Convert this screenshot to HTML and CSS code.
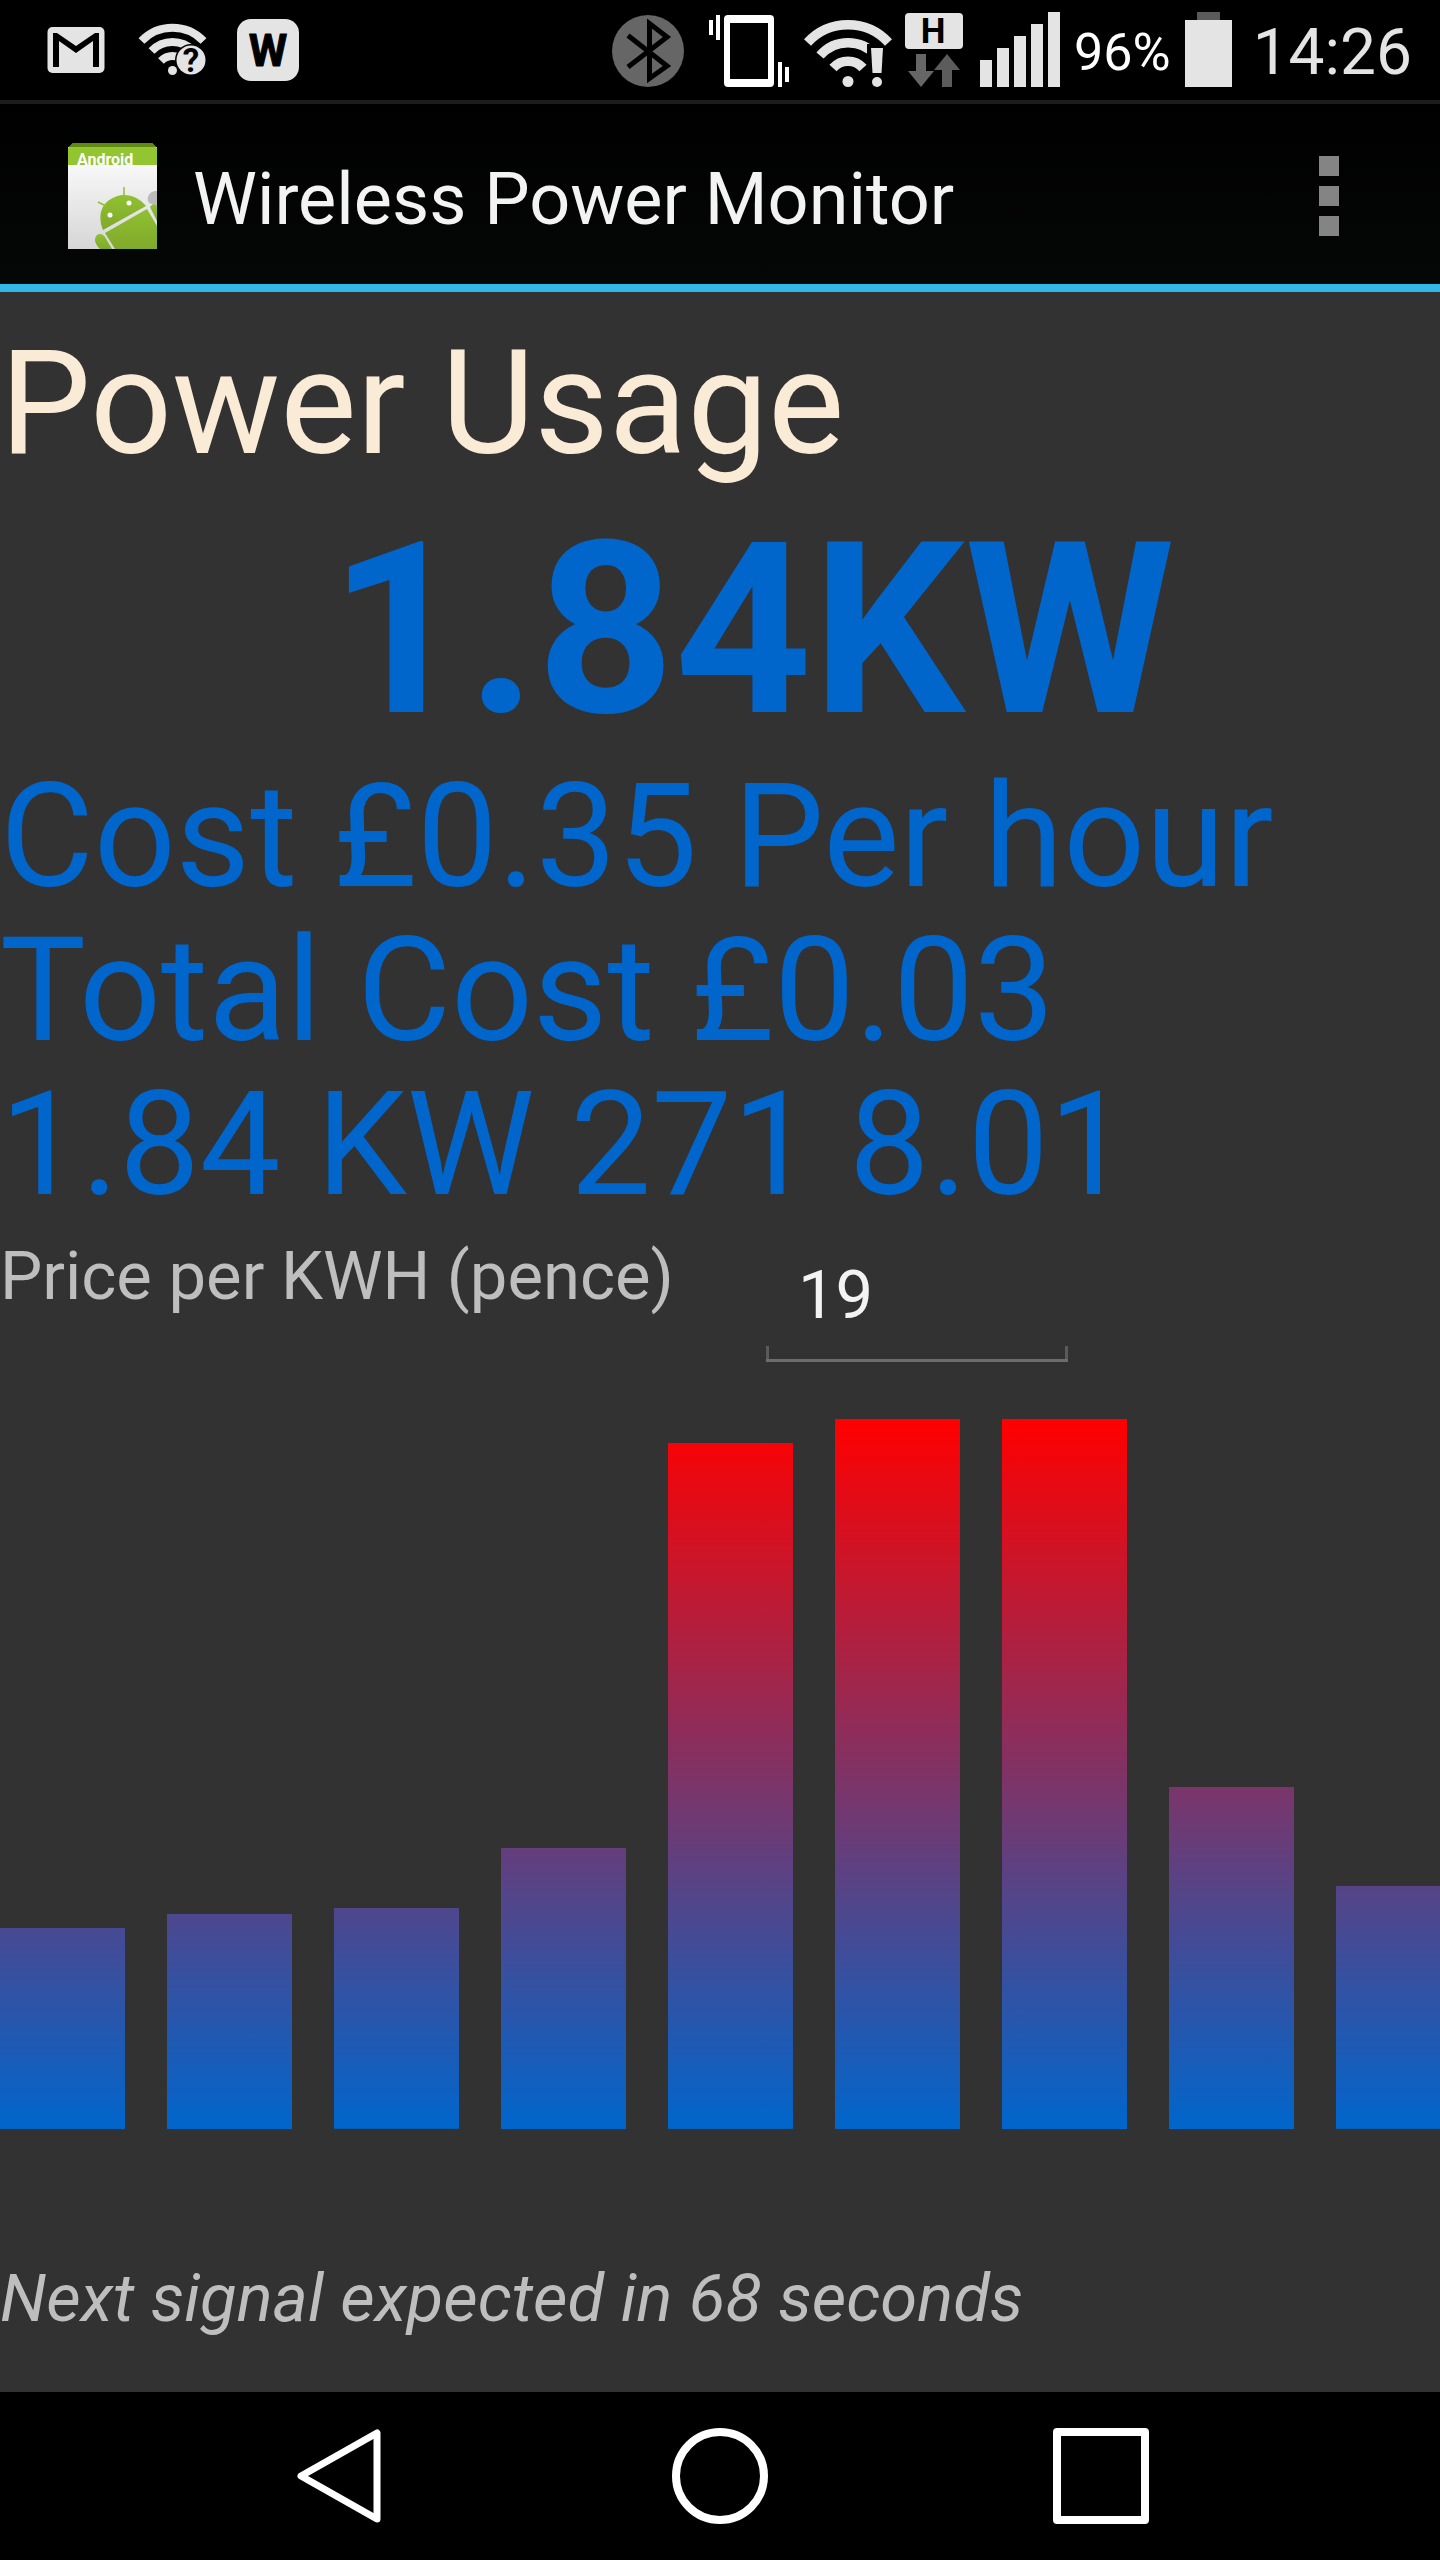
FILE: index.html
```html
<!DOCTYPE html>
<html lang="en">
<head>
  <meta charset="UTF-8" />
  <meta name="viewport" content="width=device-width, initial-scale=1.0" />
  <title>Wireless Power Monitor</title>
  <link rel="stylesheet" href="styles.css">
</head>
<body>
  <!-- System status bar -->
  <div class="status-bar">
    <div class="status-group notifications">
      <svg class="status-icon" width="58" height="100" viewBox="47 0 58 100" aria-label="Gmail">
        <rect x="47.500" y="27" width="57" height="46" rx="5" fill="#e4e4e4"/>
        <path d="M53 67V33H57L76 46L95 33H99V67H93V41L76 53L59 41V67Z" fill="#000"/>
      </svg>
      <svg class="status-icon" width="68" height="100" viewBox="137 0 68 100" aria-label="Wi-Fi available">
        <g fill="none" stroke="#e4e4e4" stroke-width="8">
          <path d="M141.500 41A43 43 0 0 1 203.500 41"/>
          <path d="M151.500 51A29 29 0 0 1 193.500 51"/>
          <path d="M161 61A16 16 0 0 1 184 61"/>
        </g>
        <circle cx="172.500" cy="70.500" r="4.500" fill="#e4e4e4"/>
        <circle cx="191" cy="60" r="16" fill="#000"/>
        <circle cx="191" cy="60" r="14.500" fill="#e4e4e4"/>
        <text class="icon-text" x="191" y="72" font-size="33">?</text>
      </svg>
      <svg class="status-icon" width="62" height="100" viewBox="237 0 62 100" aria-label="W">
        <rect x="237" y="19" width="62" height="62" rx="14" fill="#e4e4e4"/>
        <text class="icon-text heavy" x="268" y="66" font-size="44">W</text>
      </svg>
    </div>

    <div class="status-group system">
      <svg class="status-icon" width="83" height="100" viewBox="610 0 83 100" aria-label="Bluetooth">
        <circle cx="646" cy="51" r="36" fill="#666"/>
        <path d="M626 35.500L665 66L647.500 78.500V23.500L665 37L626 67" fill="none" stroke="#000" stroke-width="5"/>
      </svg>
      <svg class="status-icon" width="81" height="100" viewBox="707 0 81 100" aria-label="Vibrate">
        <path d="M707 20h4v15h-4zM714 15h4v25h-4zM776 62h4v25h-4zM783 67h4v15h-4z" fill="#fff"/>
        <path d="M726 15H768Q772 15 772 19V83Q772 87 768 87H726Q722 87 722 83V19Q722 15 726 15ZM728 23V79H766V23Z" fill="#fff" fill-rule="evenodd"/>
      </svg>
      <svg class="status-icon" width="87" height="100" viewBox="802 0 87 100" aria-label="Wi-Fi">
        <g fill="none" stroke="#e4e4e4" stroke-width="9.500">
          <path d="M818 55.500A37 37 0 0 1 874 55.500"/>
          <path d="M831 68A20 20 0 0 1 861 68"/>
        </g>
        <path d="M865 53V44H885V90H866Z" fill="#000"/>
        <path d="M805.500 42.500A55 55 0 0 1 886.500 42.500" fill="none" stroke="#e4e4e4" stroke-width="9.500"/>
        <circle cx="846" cy="81.500" r="5.500" fill="#e4e4e4"/>
        <path d="M869 48H881L879.500 73H870.500Z" fill="#e4e4e4"/>
        <circle cx="875" cy="82" r="5" fill="#e4e4e4"/>
      </svg>
      <svg class="status-icon" width="61" height="100" viewBox="903 0 61 100" aria-label="HSPA data">
        <rect x="903" y="13" width="58" height="36" rx="4" fill="#e4e4e4"/>
        <text class="icon-text" x="931" y="43" font-size="35">H</text>
        <path d="M914 54H924V71H932L919 87L906 71H914Z" fill="#666"/>
        <path d="M945 54L958 70H950V87H940V70H932Z" fill="#5c5c5c"/>
      </svg>
      <svg class="status-icon" width="80" height="100" viewBox="978 0 80 100" aria-label="Signal">
        <path d="M978 60h12v27h-12zM995 48h12v39h-12zM1012 36h12v51h-12zM1029 24h12v63h-12zM1046 12h12v75h-12z" fill="#e4e4e4"/>
      </svg>
      <span class="battery-level">96%</span>
      <svg class="status-icon" width="54" height="100" viewBox="1185 0 54 100" aria-label="Battery">
        <path d="M1197 12h23v8h-23z" fill="#5a5a5a"/>
        <path d="M1185 20h47v67h-47z" fill="#e4e4e4"/>
      </svg>
      <time class="clock">14:26</time>
    </div>
  </div>

  <!-- Action bar -->
  <header class="action-bar">
    <svg class="app-icon" width="90" height="108" viewBox="0 0 90 108" aria-hidden="true">
      <defs>
        <linearGradient id="paper" x1="0" y1="0" x2="0" y2="1">
          <stop offset="0" stop-color="#fff"/>
          <stop offset="1" stop-color="#d6d6d6"/>
        </linearGradient>
        <linearGradient id="robot" x1="0" y1="0" x2="0" y2="1">
          <stop offset="0" stop-color="#8fc131"/>
          <stop offset="1" stop-color="#80a92a"/>
        </linearGradient>
        <clipPath id="band"><path d="M0 0H90V23H0Z"/></clipPath>
      </defs>
      <path d="M0 5H89V107H0Z" fill="url(#paper)"/>
      <path d="M5 1H84L89 6V23H0V6Z" fill="#92c52f"/>
      <path d="M5 1H84L88 5H1Z" fill="#5f8a14"/>
      <text class="app-icon-text" x="9" y="23" font-size="16" clip-path="url(#band)">Android</text>
      <path d="M89 49A8 8 0 0 0 81 61L89 64Z" fill="#bbb"/>
      <g fill="url(#robot)">
        <path d="M35 88C29 72 34 60 47 55C58 50 71 55 78 64Z"/>
        <path d="M37 91L79 67L89 84V107H47Z"/>
        <path d="M27 98C27 91 34 90 37 95L44 107H32Q27 102 27 98Z"/>
        <path d="M82 65Q85 60 89 64V79Z"/>
      </g>
      <path d="M56 54V45M38 64L30 60" stroke="#8fc131" stroke-width="1.500"/>
      <circle cx="42" cy="73" r="2.500" fill="#fff"/>
      <circle cx="61" cy="61" r="2.500" fill="#fff"/>
    </svg>
    <h1 class="app-title">Wireless Power Monitor</h1>
    <button class="overflow-button" type="button" aria-label="More options">
      <span class="square"></span>
      <span class="square"></span>
      <span class="square"></span>
    </button>
  </header>

  <main class="content">
    <h2 class="heading">Power Usage</h2>
    <p class="reading">1.84KW</p>
    <p class="detail">Cost £0.35 Per hour</p>
    <p class="detail">Total Cost £0.03</p>
    <p class="detail">1.84 KW 271 8.01</p>

    <div class="price-row">
      <label for="price">Price per KWH (pence)</label>
      <input id="price" class="price-input" type="text" inputmode="decimal" value="19">
    </div>

    <!-- Usage history, heights relative to the highest reading -->
    <div class="chart-window">
      <div class="chart" role="img" aria-label="Power usage history">
        <div class="bar" style="height: 28.3%"></div>
        <div class="bar" style="height: 30.3%"></div>
        <div class="bar" style="height: 31.1%"></div>
        <div class="bar" style="height: 39.6%"></div>
        <div class="bar" style="height: 96.6%"></div>
        <div class="bar" style="height: 100%"></div>
        <div class="bar" style="height: 100%"></div>
        <div class="bar" style="height: 48.2%"></div>
        <div class="bar" style="height: 34.2%"></div>
      </div>
    </div>

    <p class="next-signal">Next signal expected in 68 seconds</p>
  </main>

  <!-- System navigation -->
  <nav class="nav-bar" aria-label="System navigation">
    <button class="nav-button" type="button" aria-label="Back">
      <svg width="96" height="96" viewBox="0 0 96 96">
        <path d="M86 5V91L10 48Z" fill="none" stroke="#fff" stroke-width="7" stroke-linejoin="round"/>
      </svg>
    </button>
    <button class="nav-button" type="button" aria-label="Home">
      <svg width="96" height="96" viewBox="0 0 96 96">
        <circle cx="48" cy="48" r="44" fill="none" stroke="#fff" stroke-width="8"/>
      </svg>
    </button>
    <button class="nav-button" type="button" aria-label="Recent apps">
      <svg width="96" height="96" viewBox="0 0 96 96">
        <rect x="4" y="4" width="88" height="88" fill="none" stroke="#fff" stroke-width="8" stroke-linejoin="round"/>
      </svg>
    </button>
  </nav>
</body>
</html>
```

FILE: styles.css
```css
*, *::before, *::after {
  box-sizing: border-box;
  margin: 0;
  padding: 0;
}

body {
  display: flex;
  flex-direction: column;
  min-height: 100vh;
  background: #323232;
  color: #bebebe;
  font-family: Roboto, sans-serif;
  font-size: 67px;
  line-height: 80px;
  overflow-x: hidden;
}

button {
  background: none;
  border: none;
  cursor: pointer;
}

/* Status bar */
.status-bar {
  display: flex;
  justify-content: space-between;
  padding: 0 28px 0 47px;
  background: #000;
  border-bottom: 4px solid #1c1c1c;
}
.status-group {
  display: flex;
  align-items: center;
}
.notifications {
  gap: 32px;
}
.system {
  gap: 14px;
}
.status-icon {
  display: block;
  overflow: visible;
}
.icon-text {
  fill: #000;
  font-weight: 700;
  text-anchor: middle;
}
.heavy {
  stroke: #000;
  stroke-width: 1px;
  stroke-linejoin: round;
}
.battery-level {
  color: #fff;
  font-size: 52px;
  padding-top: 6px;
}
.clock {
  color: #e4e4e4;
  font-size: 64px;
  padding-top: 6px;
}

/* Action bar */
.action-bar {
  display: flex;
  align-items: center;
  padding: 4px 91px 0 68px;
  height: 188px;
  background: linear-gradient(#000, #050706);
  border-bottom: 8px solid #33b5e5;
}
.app-icon {
  flex: none;
}
.app-icon-text {
  fill: #fff;
  font-weight: 700;
}
.app-title {
  flex: 1;
  padding: 8px 0 0 35px;
  color: #f3f3f3;
  font-size: 72px;
  font-weight: 400;
}
.overflow-button {
  display: flex;
  flex-direction: column;
  gap: 10px;
  padding: 10px;
}
.square {
  width: 20px;
  height: 20px;
  background: #848484;
}

/* Readings */
.content {
  flex: 1;
  padding-top: 16px;
}
.heading {
  color: #faebd7;
  font-size: 144px;
  font-weight: 400;
  line-height: 192px;
}
.reading {
  padding-left: 64px;
  color: #06c;
  font-size: 240px;
  font-weight: 700;
  line-height: 260px;
  text-align: center;
}
.detail {
  color: #06c;
  font-size: 144px;
  line-height: 154px;
}

/* Price field */
.price-row {
  display: flex;
  align-items: flex-start;
  gap: 92px;
  padding-top: 14px;
}
.price-input {
  width: 302px;
  height: 126px;
  padding: 0 32px 8px;
  border: none;
  outline: none;
  color: #f3f3f3;
  font: inherit;
  /* underline with short upright ends */
  background:
    linear-gradient(#6c6c6c, #6c6c6c) bottom / 100% 3px no-repeat,
    linear-gradient(#5a5a5a, #5a5a5a) left bottom / 3px 16px no-repeat,
    linear-gradient(#5a5a5a, #5a5a5a) right bottom / 3px 16px no-repeat;
}

/* Chart: the last bar runs off the right edge */
.chart-window {
  margin-top: 57px;
  overflow: hidden;
}
.chart {
  display: grid;
  grid-template-columns: repeat(9, 1fr);
  gap: 42px;
  align-items: end;
  height: 710px;
  margin-right: -21px;
}
.bar {
  background: linear-gradient(#f00, #06c) bottom / 100% 710px no-repeat;
}

.next-signal {
  padding: 129px 0 54px;
  font-style: italic;
}

/* Navigation bar */
.nav-bar {
  display: flex;
  justify-content: center;
  height: 168px;
  background: #000;
}
.nav-button {
  display: flex;
  flex: 0 1 381px;
  align-items: center;
  justify-content: center;
}
```
